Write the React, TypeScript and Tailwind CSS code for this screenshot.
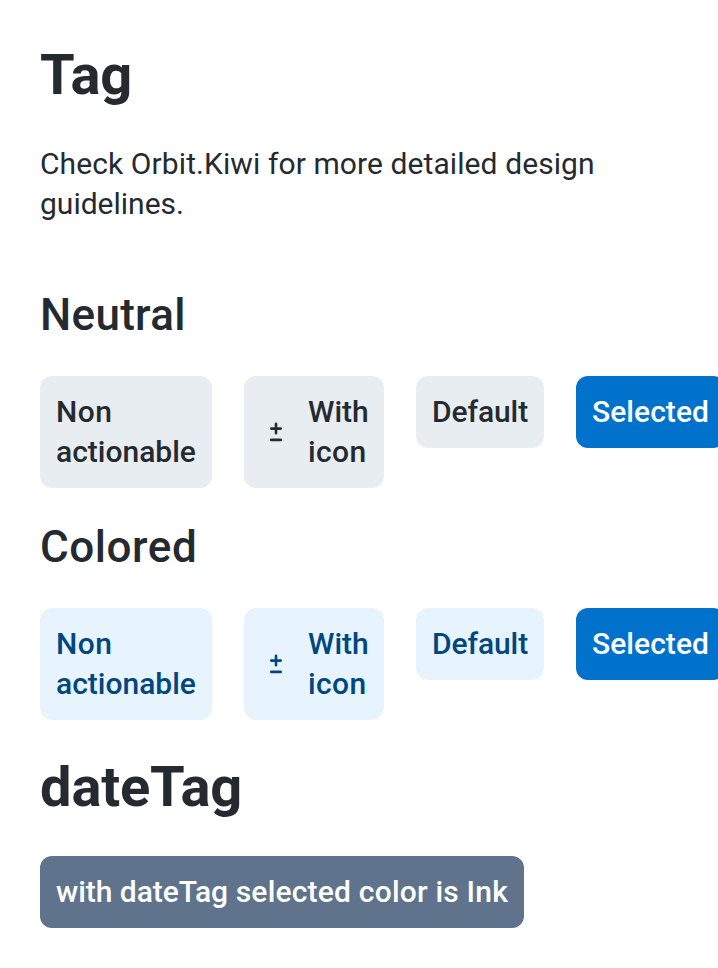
import React from "react";

type Tone = "neutral" | "colored" | "selected" | "date";
type Line = { text: string; tracking?: string };

const tones: Record<Tone, string> = {
  neutral: "bg-[#e8edf1] text-[#252a31]",
  colored: "bg-[#e8f4fd] text-[#004680]",
  selected: "bg-[#0172cb] text-white",
  date: "bg-[#5f738c] text-white",
};

function PlusMinus() {
  return (
    <svg viewBox="0 0 32 32" className="mr-4 h-8 w-8 shrink-0" fill="none" stroke="currentColor" strokeWidth="2.6" strokeLinecap="round">
      <path d="M11.3 12.6h9.4M16 7.9v9.4M11.3 23.9h9.4" />
    </svg>
  );
}

function Tag({ tone, width, icon, lines }: { tone: Tone; width: string; icon?: boolean; lines: Line[] }) {
  return (
    <div className={`flex shrink-0 items-center rounded-[12px] px-4 py-4 text-[30px] leading-10 font-medium whitespace-nowrap ${width} ${tones[tone]}`}>
      {icon && <PlusMinus />}
      <div>
        {lines.map((l) => (
          <div key={l.text} className={l.tracking}>
            {l.text}
          </div>
        ))}
      </div>
    </div>
  );
}

function Row({ tone }: { tone: Tone }) {
  return (
    <div className="flex items-start gap-8">
      <Tag tone={tone} width="w-[172px]" lines={[{ text: "Non", tracking: "tracking-[0.5px]" }, { text: "actionable" }]} />
      <Tag tone={tone} width="w-[140px]" icon lines={[{ text: "With" }, { text: "icon", tracking: "tracking-[0.4px]" }]} />
      <Tag tone={tone} width="w-[128px]" lines={[{ text: "Default", tracking: "tracking-[-0.1px]" }]} />
      <Tag tone="selected" width="w-[149px]" lines={[{ text: "Selected", tracking: "tracking-[0.05px]" }]} />
    </div>
  );
}

export default function App() {
  return (
    <main className="h-[968px] w-full overflow-hidden bg-white px-10 pt-[39px] font-['Roboto',sans-serif] text-[#252a31]">
      <h1 className="text-[56px] leading-[72px] font-bold tracking-[-0.2px]">Tag</h1>
      <p className="mt-[33px] text-[30px] leading-10">
        <span className="tracking-[0.09px]">Check Orbit.Kiwi for more detailed design</span>
        <br />
        guidelines.
      </p>
      <h2 className="mt-[63px] text-[44px] leading-[56px] font-medium tracking-[0.3px]">Neutral</h2>
      <div className="mt-[33px]">
        <Row tone="neutral" />
      </div>
      <h2 className="mt-[31px] text-[44px] leading-[56px] font-medium tracking-[0.55px]">Colored</h2>
      <div className="mt-[33px]">
        <Row tone="colored" />
      </div>
      <h1 className="mt-[31px] text-[56px] leading-[72px] font-bold tracking-[-0.15px]">dateTag</h1>
      <div className="mt-[33px] flex">
        <div className="w-[484px] rounded-[12px] bg-[#5f738c] p-4 text-[30px] leading-10 font-medium whitespace-nowrap text-white">
          <span className="tracking-[-0.05px]">with dateTag</span>
          <span className="tracking-[0.2px]"> selected color is Ink</span>
        </div>
      </div>
    </main>
  );
}
